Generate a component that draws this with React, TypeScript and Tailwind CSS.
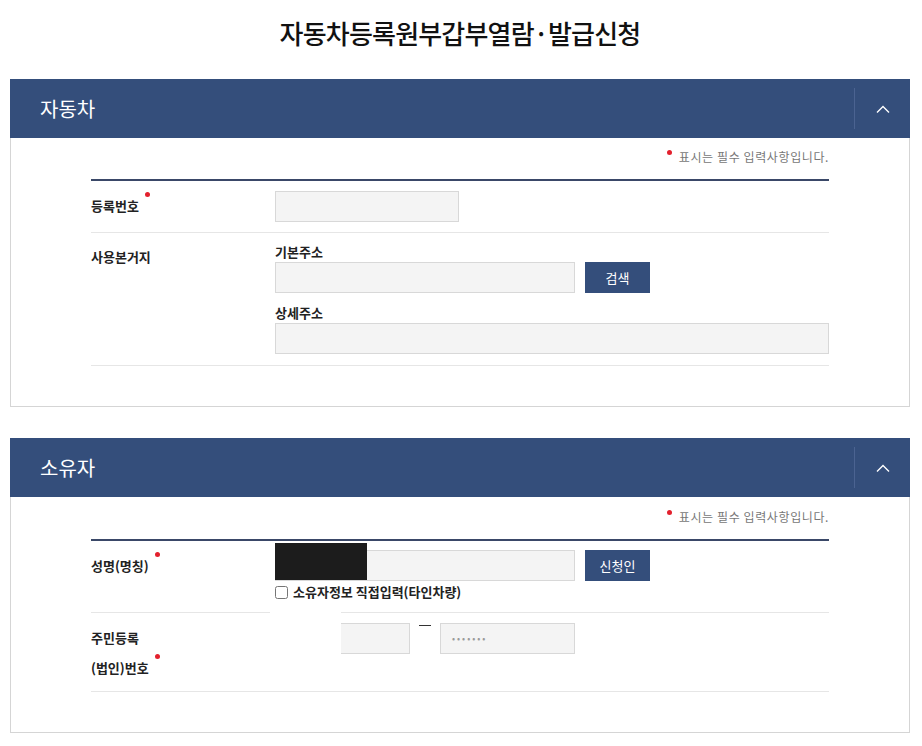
import type { ReactNode } from 'react';

function Dot() {
  return <span className="relative -top-[13px] ml-[6px] inline-block h-[5px] w-[5px] rounded-full bg-[#e3202d] align-middle" />;
}

function SectionHeader({ title }: { title: string }) {
  return (
    <div className="flex h-[59px] items-center bg-[#344e7b]">
      <h2 className="flex-1 pl-[30px] text-[20px] font-normal text-white">{title}</h2>
      <div className="flex h-[41px] w-[56px] items-center justify-center border-l border-[#4b6391]">
        <svg width="14" height="8" viewBox="0 0 14 8" fill="none">
          <polyline points="1,7.5 7,1.5 13,7.5" stroke="white" strokeWidth="1.4" />
        </svg>
      </div>
    </div>
  );
}

function RequiredNote() {
  return (
    <>
      <div className="flex h-[18px] items-center justify-end text-[12px] tracking-[0.6px] text-[#777]">
        <span className="relative -top-[5px] mr-[7px] inline-block h-[5px] w-[5px] rounded-full bg-[#e3202d]" />
        표시는 필수 입력사항입니다.
      </div>
      <div className="mt-[13px] h-[2px] bg-[#3a4868]" />
    </>
  );
}

function Row({ label, children, labelClass = 'pt-[18px]', className = '' }: { label: ReactNode; children: ReactNode; labelClass?: string; className?: string }) {
  return (
    <div className={`flex border-b border-[#e6e6e6] ${className}`}>
      <div className={`w-[184px] shrink-0 text-[13px] font-bold text-[#222] ${labelClass}`}>{label}</div>
      <div className="flex-1">{children}</div>
    </div>
  );
}

function Field({ className = '' }: { className?: string }) {
  return <div className={`h-[31px] border border-[#d8d8d8] bg-[#f4f4f4] ${className}`} />;
}

function Btn({ children }: { children: ReactNode }) {
  return (
    <button className="ml-[10px] flex h-[31px] w-[65px] items-center justify-center bg-[#344e7b] text-[13px] text-white">
      {children}
    </button>
  );
}

export default function App() {
  return (
    <div className="min-h-[746px] bg-white pr-[12px] pl-[10px] font-['Noto_Sans_CJK_KR',sans-serif] text-[#222]">
      <h1 className="flex h-[62px] items-center justify-center pt-[2px] text-[26px] font-medium tracking-[-0.8px] text-[#111]">
        자동차등록원부갑부열람·발급신청
      </h1>

      <section className="mt-[17px]">
        <SectionHeader title="자동차" />
        <div className="border border-t-0 border-[#d5d5d5] px-[80px] pt-[10px] pb-[40px]">
          <RequiredNote />
          <Row label={<>등록번호<Dot /></>} className="pt-[10px] pb-[10px]" labelClass="pt-[5px]">
            <Field className="w-[184px]" />
          </Row>
          <Row label="사용본거지" className="pb-[11px]" labelClass="pt-[14px]">
            <div className="pt-[11px] text-[13px] leading-[16px] font-bold">기본주소</div>
            <div className="mt-[2px] flex">
              <Field className="w-[300px]" />
              <Btn>검색</Btn>
            </div>
            <div className="mt-[12px] text-[13px] leading-[16px] font-bold">상세주소</div>
            <Field className="mt-[2px] w-full" />
          </Row>
        </div>
      </section>

      <section className="mt-[31px]">
        <SectionHeader title="소유자" />
        <div className="border border-t-0 border-[#d5d5d5] px-[80px] pt-[11px] pb-[40px]">
          <RequiredNote />
          <Row label={<>성명(명칭)<Dot /></>} className="pt-[9px] pb-[10px]" labelClass="pt-[6px]">
            <div className="flex">
              <div className="relative w-[300px]">
                <Field className="w-full" />
                <div className="absolute -top-[7px] left-0 h-[37px] w-[92px] bg-[#1c1c1c]" />
              </div>
              <Btn>신청인</Btn>
            </div>
            <label className="mt-[1px] flex h-[20px] items-center text-[13px] font-bold">
              <input type="checkbox" className="m-0 mr-[5px] h-[13px] w-[13px]" />
              소유자정보 직접입력(타인차량)
            </label>
          </Row>
          <Row
            label={<div className="leading-[30px]">주민등록<br />(법인)번호<Dot /></div>}
            className="relative pt-[10px] pb-[8px]"
            labelClass="pt-0"
          >
            <div className="flex">
              <Field className="w-[135px]" />
              <div className="flex w-[30px] justify-center pt-[2px]">
                <span className="block h-[1px] w-[12px] bg-[#333]" />
              </div>
              <div className="flex h-[31px] w-[135px] items-center border border-[#d8d8d8] bg-[#f4f4f4] pl-[11px] text-[9px] tracking-[2px] text-[#9a9a9a]">
                •••••••
              </div>
            </div>
            <div className="absolute -top-px left-[179px] h-[44px] w-[71px] bg-white" />
          </Row>
        </div>
      </section>
    </div>
  );
}
